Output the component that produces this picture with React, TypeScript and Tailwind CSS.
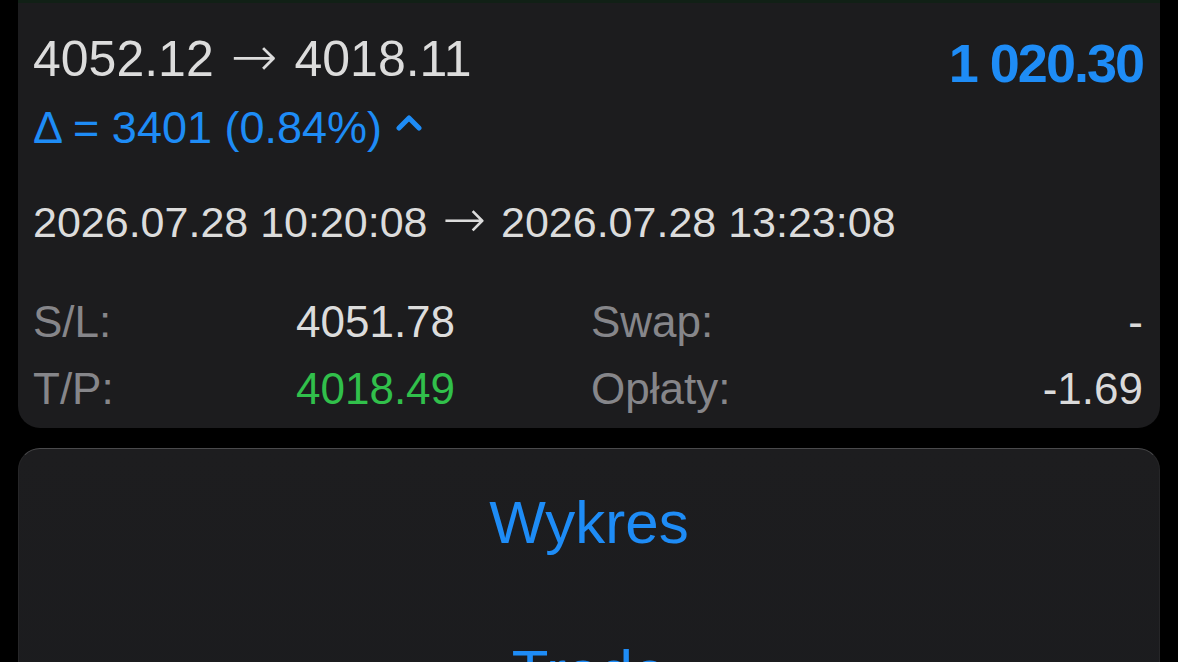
import React from "react";

const BLUE = "text-[#1e8cf6]";

function Arrow({ size }: { size: string }) {
  return <span className={`font-['DejaVu_Sans',sans-serif] font-light leading-[0px] mx-[3px] ${size}`}>→</span>;
}

function ChevronUp() {
  return (
    <svg width="28" height="18" viewBox="0 0 28 18" className="ml-[13px] mt-[11px] shrink-0">
      <polyline points="4,15 14,5 24,15" fill="none" stroke="#1e8cf6" strokeWidth="5" strokeLinecap="round" strokeLinejoin="round" />
    </svg>
  );
}

function DetailRow({ label, value, valueClass, label2, value2 }: { label: string; value: string; valueClass: string; label2: string; value2: string }) {
  return (
    <div className="grid grid-cols-[263px_295px_1fr_auto] text-[44px] leading-[52px]">
      <span className="text-[#86868a]">{label}</span>
      <span className={valueClass}>{value}</span>
      <span className="text-[#86868a]">{label2}</span>
      <span className="text-[#dadada] text-right">{value2}</span>
    </div>
  );
}

export default function App() {
  return (
    <div className="w-[1178px] h-[662px] overflow-hidden bg-black px-[18px] font-['Liberation_Sans',Arial,sans-serif]">
      <div className="bg-[#1c1c1e] rounded-b-[22px] border-t-[3px] border-[#112016] pl-[15px] pr-[17px] pt-[28px] pb-[13px]">
        <div className="flex items-start justify-between h-[56px]">
          <span className="text-[50px] leading-[56px] text-[#dcdcdc]">
            4052.12 <Arrow size="text-[56px]" /> 4018.11
          </span>
          <span className={`text-[54px] leading-[56px] font-bold tracking-[-2px] mt-1 ${BLUE}`}>1 020.30</span>
        </div>
        <div className={`mt-[15px] flex items-start text-[45px] leading-[52px] ${BLUE}`}>
          <span>Δ = 3401 (0.84%)</span>
          <ChevronUp />
        </div>
        <div className="mt-[42px] h-[52px] text-[43px] leading-[52px] text-[#dcdcdc]">
          2026.07.28 10:20:08 <Arrow size="text-[52px]" /> 2026.07.28 13:23:08
        </div>
        <div className="mt-[48px] flex flex-col gap-[15px]">
          <DetailRow label="S/L:" value="4051.78" valueClass="text-[#dcdcdc]" label2="Swap:" value2="-" />
          <DetailRow label="T/P:" value="4018.49" valueClass="text-[#31c04b]" label2="Opłaty:" value2="-1.69" />
        </div>
      </div>

      <div className="mt-[20px] h-[400px] rounded-t-[22px] border border-[#262628] border-t-[#4a4a4c] bg-gradient-to-b from-[#1d1d1f] to-[#1a1b1e] pt-[40px] flex flex-col items-center">
        <span className={`text-[60px] leading-[68px] ${BLUE}`}>Wykres</span>
        <span className={`mt-[81px] text-[60px] leading-[68px] ${BLUE}`}>Trade</span>
      </div>
    </div>
  );
}
